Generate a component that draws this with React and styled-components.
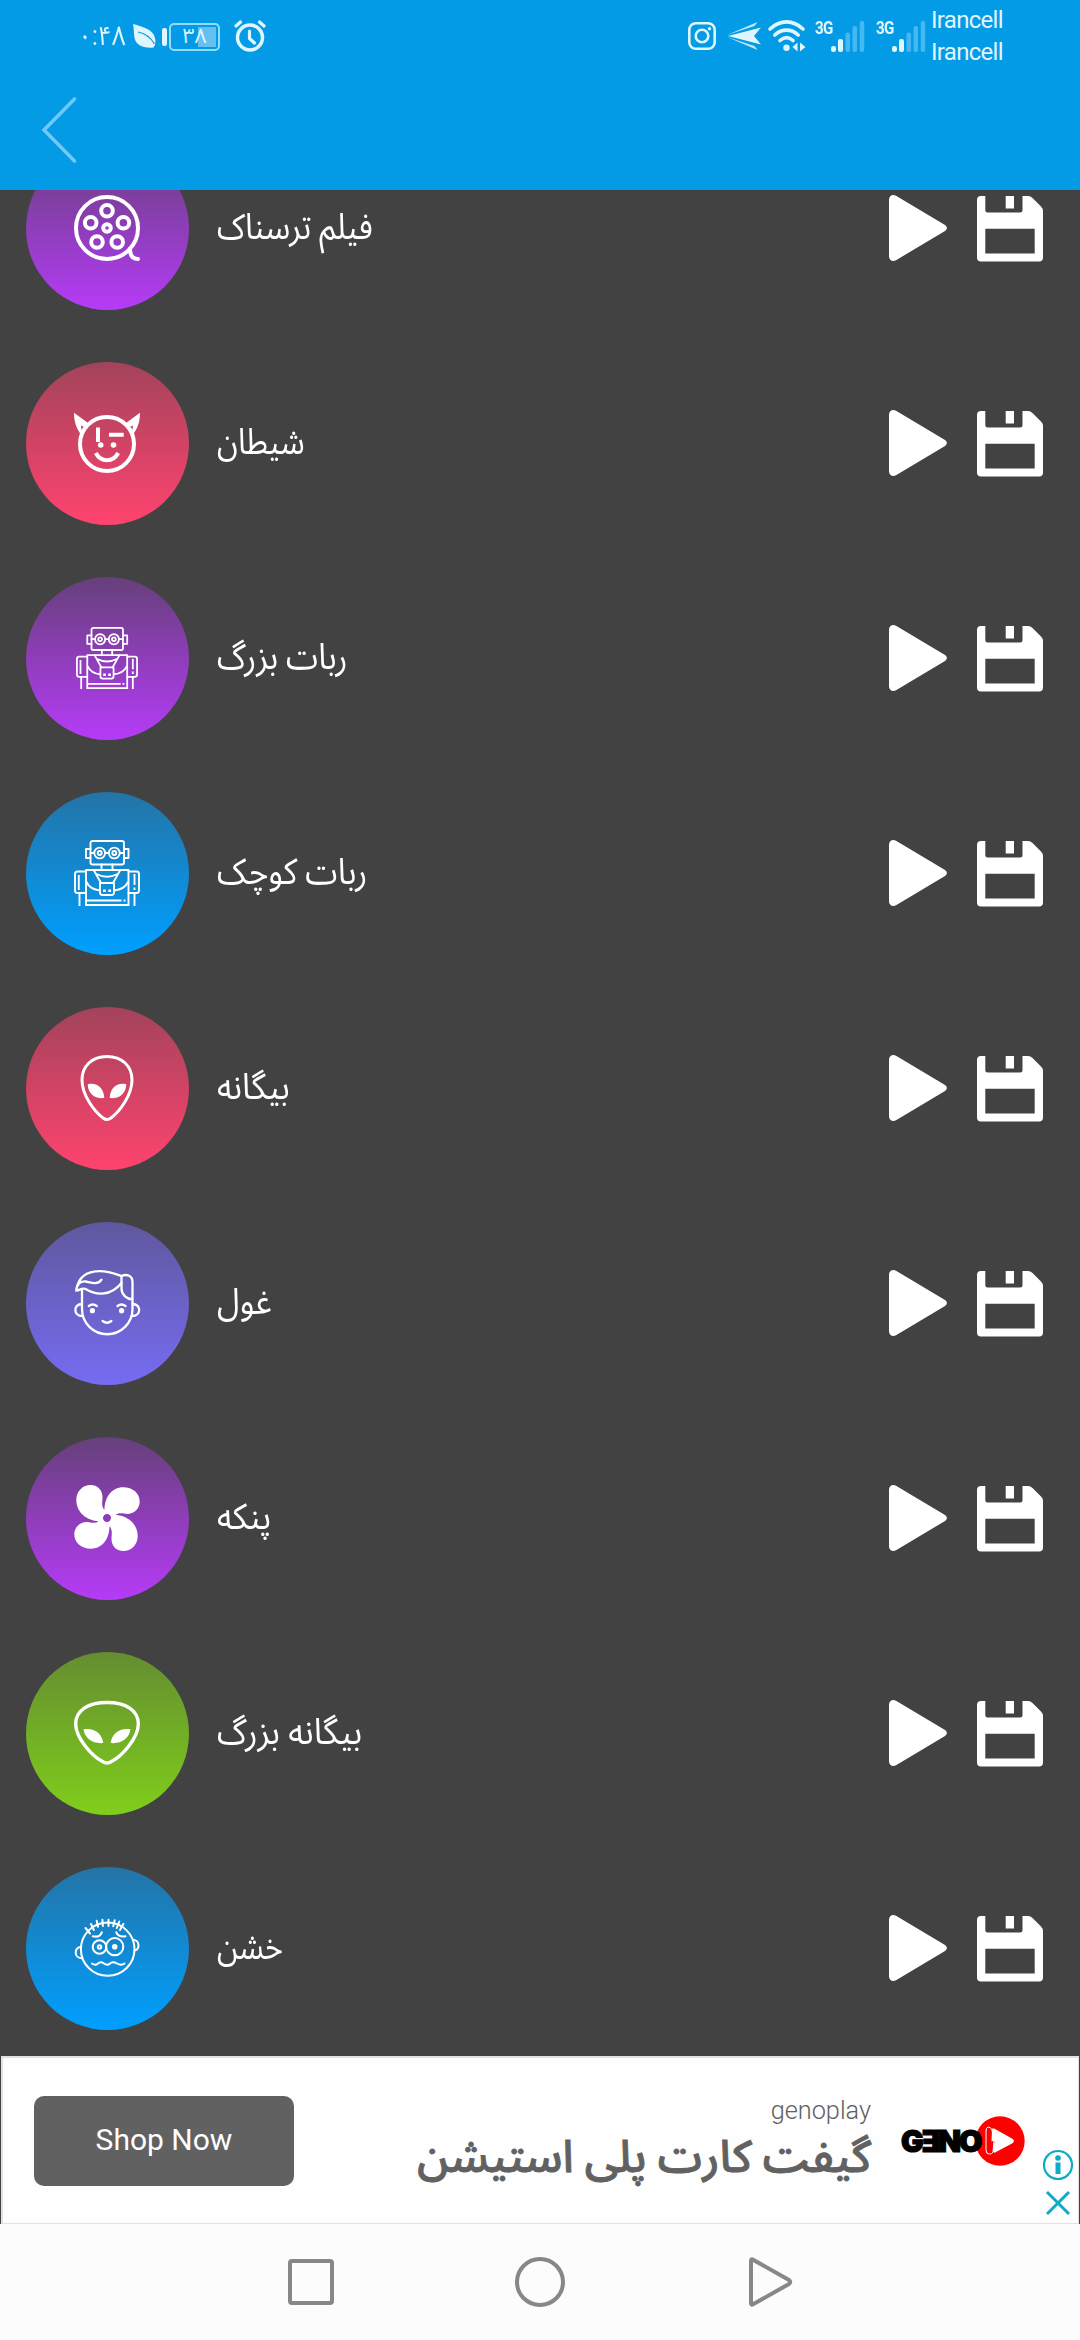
import React from "react";
import styled, { createGlobalStyle } from "styled-components";

const persian = `Roboto, "Noto Sans Arabic", "Noto Sans", "DejaVu Sans", sans-serif`;

const GlobalStyle = createGlobalStyle`
  * { box-sizing: border-box; }
  body { margin: 0; background: #424242; font-family: ${persian}; }
  svg { display: block; flex: none; overflow: visible; }
`;

const Screen = styled.div`
  width: 1080px;
  height: 2340px;
  display: flex;
  flex-direction: column;
  overflow: hidden;
  background: #424242;
`;

const StatusBar = styled.header`
  height: 70px;
  flex: none;
  display: flex;
  justify-content: space-between;
  align-items: flex-start;
  padding: 0 78px 0 78px;
  background: #049be6;
  color: #dff6ff;
`;

const StatusSide = styled.div`
  display: flex;
  align-items: center;
  height: 72px;
`;

const Clock = styled.span`
  width: 49px;
  margin-right: 6px;
  font-size: 27px;
  line-height: 30px;
  white-space: nowrap;
  transform: scaleX(0.9);
  transform-origin: left;
`;

const Battery = styled.div`
  display: flex;
  align-items: center;
  gap: 2px;
  margin: 2px 14px 0 6px;
`;

const BatteryTip = styled.span`
  width: 5px;
  height: 18px;
  border-radius: 2px;
  background: #dff6ff;
`;

const BatteryBody = styled.span`
  width: 51px;
  height: 28px;
  display: flex;
  align-items: center;
  justify-content: center;
  border: 2px solid #92dbfb;
  border-radius: 5px;
  font-size: 21px;
  line-height: 24px;
  padding-bottom: 3px;
  background: linear-gradient(#63c0f0, #63c0f0) 27px 2px / 18px 20px no-repeat;
`;

const Signal = styled.div`
  display: flex;
  align-items: flex-start;
  width: 50px;
  margin-left: ${(p) => p.$gap}px;
`;

const Network = styled.span`
  width: 16px;
  font: 700 19px/15px "Roboto", sans-serif;
  letter-spacing: -1px;
  transform: scaleX(0.8);
  transform-origin: left;
  white-space: nowrap;
`;

const Carriers = styled.div`
  width: 71px;
  margin-left: 5px;
  display: flex;
  flex-direction: column;
  font: 400 24px/32px Roboto, sans-serif;
  letter-spacing: -0.7px;
`;

const Toolbar = styled.nav`
  height: 120px;
  flex: none;
  display: flex;
  align-items: center;
  padding-left: 42px;
  background: #049be6;
`;

const List = styled.main`
  height: 1866px;
  flex: none;
  display: flex;
  flex-direction: column;
  justify-content: flex-end;
  overflow: hidden;
`;

const Row = styled.div`
  height: 215px;
  flex: none;
  display: flex;
  align-items: center;
  padding: 0 37px 0 26px;
`;

const Avatar = styled.div`
  width: 163px;
  height: 163px;
  display: flex;
  align-items: center;
  justify-content: center;
  padding: 0 1px 1px 0;
  border-radius: 50%;
  background: linear-gradient(${(p) => p.$from}, ${(p) => p.$to});
`;

const Label = styled.span`
  flex: 1;
  padding: 0 0 3px 28px;
  color: #fff;
  font-size: 36px;
  line-height: 50px;
  text-align: left;
  direction: rtl;
`;

const LabelText = styled.span`
  display: inline-block;
  white-space: nowrap;
  transform: scaleX(${(p) => p.$condense});
  transform-origin: left;
`;

const Actions = styled.div`
  display: flex;
  align-items: center;
  gap: 30px;
  padding-bottom: 1px;
`;

const Ad = styled.aside`
  height: 168px;
  flex: none;
  display: flex;
  align-items: center;
  margin: 0 1px;
  padding-left: 31px;
  border: 2px solid #e2e2e2;
  border-bottom-width: 1px;
  border-right-width: 1px;
  background: #fefefe;
`;

const ShopButton = styled.button`
  width: 260px;
  height: 90px;
  border: 0;
  border-radius: 10px;
  background: #616161;
  color: #fff;
  font: 400 30px/88px Roboto, sans-serif;
  padding: 0 0 2px;
`;

const AdText = styled.div`
  width: 577px;
  display: flex;
  flex-direction: column;
  align-items: flex-end;
  color: #616161;
`;

const Advertiser = styled.span`
  font: 300 25.3px/32px Roboto, sans-serif;
`;

const Headline = styled.span`
  font-size: 44.7px;
  font-weight: 500;
  line-height: 60px;
  direction: rtl;
  white-space: nowrap;
  -webkit-text-stroke: 0.9px #616161;
`;

const Logo = styled.div`
  width: 124px;
  margin-left: 30px;
  display: flex;
  align-items: center;
`;

const LogoName = styled.span`
  width: 74px;
  font: 900 30px/30px Inter, "DejaVu Sans", sans-serif;
  letter-spacing: -2px;
  color: #000;
  -webkit-text-stroke: 1.2px #000;
  z-index: 1;
  white-space: nowrap;
`;

const AdChoices = styled.div`
  align-self: flex-end;
  margin: 0 0 8px 18px;
  display: flex;
  flex-direction: column;
  align-items: center;
  gap: 11px;
`;

const NavBar = styled.footer`
  height: 116px;
  flex: none;
  display: flex;
  align-items: center;
  justify-content: space-between;
  padding: 0 287px;
  background: #fcfcfc;
`;

const Line = ({ children, w = 3, scale = 66 }) => (
  <svg width={scale} height={scale} viewBox="0 0 66 66" fill="none" stroke="#fff" strokeWidth={w} strokeLinecap="round" strokeLinejoin="round">
    {children}
  </svg>
);

const Reel = () => (
  <Line w={4}>
    <circle cx="33" cy="33" r="31" />
    <circle cx="33" cy="33" r="3.8" />
    <circle cx="33" cy="15.7" r="5.8" />
    <circle cx="16.7" cy="27.7" r="5.8" />
    <circle cx="49.4" cy="27.7" r="5.8" />
    <circle cx="23" cy="47" r="5.8" />
    <circle cx="43.2" cy="47" r="5.8" />
    <path d="M56 54c0 6 2.500 10 8 10" />
  </Line>
);

const Devil = () => (
  <Line w={4}>
    <circle cx="33" cy="34" r="27" />
    <path fill="#fff" stroke="none" fillRule="evenodd" d="M0 2.800L14 13 7.500 25C2.500 19 0 12 0 2.800zM7 15.500l.6 4.500 2.600-3zM66 2.800L52 13l6.500 12C63.500 19 66 12 66 2.800zM59 15.500l-.6 4.500-2.600-3z" />
    <path strokeLinecap="butt" d="M24 17.500V32M35 24.800h14.700" />
    <circle cx="26.700" cy="35" r="2.800" fill="#fff" stroke="none" />
    <circle cx="39.500" cy="35" r="2.800" fill="#fff" stroke="none" />
    <path strokeLinecap="butt" d="M21.800 43c5 9.500 17.400 9.500 22.400 0" />
  </Line>
);

const Robot = ({ scale }) => (
  <Line w={1.9} scale={scale}>
    <rect x="16.500" y="1" width="33.500" height="23.500" rx="2" />
    <path d="M16.500 9H12v9h4.500M50 9h4.500v9H50M16.500 13h3.700M31.200 13h3.600M46 13h4" />
    <circle cx="25.700" cy="13" r="5.400" /><circle cx="40.300" cy="13" r="5.400" />
    <circle cx="25.700" cy="13" r="2" /><circle cx="40.300" cy="13" r="2" />
    <path d="M27.500 24.500V30M38.500 24.500V30" />
    <path strokeLinecap="butt" d="M12 66V30h42.500v36M12 65h42.500M12 60.500h35.500M49.500 60.500h2" />
    <path d="M12 31.500H3.500Q1 31.500 1 34v16.500Q1 53 3.500 53H12M54.500 31.500h8Q65 31.500 65 34v16.500Q65 53 62.500 53h-8" />
    <path strokeLinecap="butt" d="M4.800 35v15M60.500 34v11M60.500 47.500v2.500M5.500 53v13M60.500 53v13" />
    <path d="M19.700 30L27 43M46.300 30L39 43M22.500 34q10.500 5.500 21 0" />
    <path d="M26 43h14v9.500q0 2.500-2.500 2.500h-9Q26 55 26 52.500zM12.500 42q3.500 7.500 13.500 8.500M54 42q-3.500 7.500-14 8.500" />
    <path strokeLinecap="butt" strokeWidth="2.500" d="M29 50.800h2.800M34.300 50.800h2.800" />
  </Line>
);

const Alien = () => (
  <Line w={3}>
    <path d="M33 1.500C18 1.500 8 11 8 25c0 15 12 31 21 38q4 3 8 0c9-7 21-23 21-38C58 11 48 1.500 33 1.500z" />
    <path fill="#fff" stroke="none" d="M13.700 29.200C23 27 30 33 30.300 43 21 44 14 39 13.700 29.200zM52.300 29.200C43 27 36 33 35.700 43c9.300 1 16.300-4 16.600-13.800z" />
  </Line>
);

const WideAlien = () => (
  <Line w={3.400}>
    <path d="M33 2.500C14 2.500 1.700 10.500 1.700 24 1.700 38 18 56 28.500 61.500q4.500 3 9 0C48 56 64.300 38 64.300 24 64.300 10.500 52 2.500 33 2.500z" />
    <path fill="#fff" stroke="none" d="M9.500 29.300C20 27.500 28 33 29.300 43 19 44 11 39 9.500 29.300zM56.500 29.300C46 27.500 38 33 36.700 43 47 44 55 39 56.500 29.300z" />
  </Line>
);

const Boy = () => (
  <Line w={2.300}>
    <path d="M8 19v20a25.200 25.200 0 0 0 50.500 0V12C58.500 6 53 3.500 47.500 6v12.500c0 6 5 10.500 11 11" />
    <path d="M8 34c-9 0-9 12 .500 12M58.500 34c9 0 9 12-.5 12" />
    <path d="M2.200 20.500C4 8 12 1.200 26 1.200 35 1.200 41 3.800 47.500 6M47.500 13C37 26 23 26 11 18.800 8 17.500 6 20.500 2.200 20.500 3 15 6 11 11.500 11.500c4 .5 12 4.500 16-1.800" />
    <path d="M14.800 36q4-3 8 0M43.500 36q4-3 8 0M28.600 51q4.400 3.400 8.800 0" />
    <circle cx="18.400" cy="40.700" r="2.600" fill="#fff" stroke="none" /><circle cx="47.600" cy="40.700" r="2.600" fill="#fff" stroke="none" />
  </Line>
);

const blades = "M25 36.300C12 35.500 2.300 27 2.300 15 2.300 6 9 0 16.500 0c8 0 12.300 6 12 13-.2 5-1 7.500 1.500 11.500L33 30zM30.500 25C30.500 12 38 2.300 49 2.300c10 0 16.700 6.200 16.700 14.200C65.700 25 58 30.500 50 28.600c-4-1-7 0-8 1L36 36z";

const Fan = () => (
  <svg width="66" height="66" viewBox="0 0 66 66" fill="#fff">
    <mask id="hub" maskUnits="userSpaceOnUse" x="-2" y="-2" width="70" height="70">
      <rect x="-2" y="-2" width="70" height="70" fill="#fff" />
      <circle cx="33" cy="33" r="4.200" fill="#000" />
    </mask>
    <path d={blades} mask="url(#hub)" />
    <path d={blades} transform="rotate(180 33 33)" mask="url(#hub)" />
    <circle cx="33" cy="33" r="6.500" fill="none" stroke="#fff" strokeWidth="5" />
  </svg>
);

const Rough = () => (
  <Line w={2}>
    <ellipse cx="33.700" cy="34.200" rx="26.800" ry="26.600" />
    <path d="M7 32c-7 0-7.500 11 .8 11.300M59 25c6.500-1 7.500 10 1.600 10.500" />
    <path d="M11.500 13l4.500 5.500M17 9l2.800 6M22.700 5.800l1.300 6M28.400 4.800l.5 6.200M34.500 4.800V11M40.700 5.200l-1.500 6M45.300 6.500l-2.500 6.500M49.300 9L46 15" />
    <circle cx="25.500" cy="32" r="6.800" /><circle cx="40.700" cy="31.700" r="8.600" />
    <circle cx="25.500" cy="32" r="1.700" /><circle cx="40.700" cy="31.700" r="2.800" fill="#fff" stroke="none" />
    <path d="M18.800 21.300q7 1.500 9-4M42.300 17.300q2 5 9.200 4" />
    <path d="M18 48.500q3.300 2.500 6 0t6 0 6 0 7 0 7.500 0" />
  </Line>
);

const Play = () => (
  <svg width="58" height="66" viewBox="0 0 58 66" fill="#fff">
    <path d="M0 4.500C0 .8 3.800-1.200 7 .8L56 30c2.500 1.600 2.500 4.400 0 6L7 65.200c-3.200 2-7 0-7-3.700z" />
  </svg>
);

const Save = () => (
  <svg width="66" height="66" viewBox="0 -0.5 66 66" fill="#fff">
    <path fillRule="evenodd" d="M4 .5H8.300V14.500q0 2.500 2.500 2.500H43q2.500 0 2.500-2.500V.5H51q2.500 0 4.500 2L64 11q2 2 2 4.500V62q0 4-4 4H4q-4 0-4-4V4.500q0-4 4-4zM8.300 33.300V58h49.400V33.300z" />
    <path d="M28.700.5H37v12.500h-8.300z" />
  </svg>
);

const Bars = () => (
  <svg width="34" height="32" viewBox="0 0 34 32" fill="#dff6ff">
    <rect x="0" y="26" width="5" height="6" rx="2.300" />
    <rect x="7" y="19" width="5" height="13" rx="2" />
    <g fill="#43b8f2">
      <rect x="14.500" y="12.500" width="4.500" height="19.500" rx="2" />
      <rect x="21.500" y="6" width="4.500" height="26" rx="2" />
      <rect x="28.700" y="1" width="4.500" height="31" rx="2" />
    </g>
  </svg>
);

const purple = ["#66407a", "#b63bf8"];
const red = ["#a3435b", "#ff436f"];
const blue = ["#2474a6", "#009fff"];

const effects = [
  { name: "فیلم ترسناک", condense: 0.885, icon: <Reel />, tone: purple },
  { name: "شیطان", condense: 0.855, icon: <Devil />, tone: red },
  { name: "ربات بزرگ", condense: 0.905, icon: <Robot scale={62} />, tone: purple },
  { name: "ربات کوچک", condense: 0.91, icon: <Robot scale={66} />, tone: blue },
  { name: "بیگانه", condense: 0.92, icon: <Alien />, tone: red },
  { name: "غول", condense: 0.91, icon: <Boy />, tone: ["#5f589d", "#766bf2"] },
  { name: "پنکه", condense: 0.92, icon: <Fan />, tone: purple },
  { name: "بیگانه بزرگ", condense: 0.935, icon: <WideAlien />, tone: ["#658d31", "#7fce1b"] },
  { name: "خشن", condense: 0.845, icon: <Rough />, tone: blue },
];

const Leaf = () => (
  <svg width="23" height="24" viewBox="0 0 23 24">
    <path fill="#dff6ff" d="M0 0c10 3 20 5 22 14 .8 3 .2 5 0 7l-1.500 2.500C10 24.500 3 21 1.500 14 .8 9 1 5 0 0z" />
    <path fill="none" stroke="#049be6" strokeWidth="1.200" d="M5 8c8 1.500 13 6 16.500 12" />
  </svg>
);

const Alarm = () => (
  <svg width="32" height="32" viewBox="0 0 32 32" fill="none" stroke="#dff6ff" strokeLinecap="round">
    <circle cx="16" cy="17.500" r="12.500" strokeWidth="3.500" />
    <path strokeWidth="3.200" d="M2 6l4.500-4M30 6l-4.500-4M15.500 11v7.500l5 4.500" />
  </svg>
);

const Instagram = () => (
  <svg width="28" height="28" viewBox="0 0 28 28" fill="none" stroke="#dff6ff" strokeWidth="2.600">
    <rect x="1.300" y="1.300" width="25.400" height="25.400" rx="6.500" />
    <circle cx="14" cy="14" r="6.300" />
    <circle cx="21.500" cy="6.700" r="1.700" fill="#dff6ff" stroke="none" />
  </svg>
);

const PlaneSlot = styled.div`
  margin: 0 7px 0 11px;
`;

const PaperPlane = () => (
  <PlaneSlot>
    <svg width="34" height="28" viewBox="0 0 34 28" fill="#dff6ff">
      <path d="M1 14L34 5.500 27 14l7 8.500z" />
      <path d="M0 13L30.500 0l-3 4zM0 15l30.500 13-3-4z" opacity=".85" />
    </svg>
  </PlaneSlot>
);

const Wifi = () => (
  <svg width="38" height="32" viewBox="0 0 38 32" fill="none" stroke="#dff6ff" strokeWidth="3.600" strokeLinecap="round">
    <path d="M2 9c10-9.500 23-9.500 33 0M6.800 15c7-6.500 16.400-6.500 23.400 0M12 20.500c4.500-4 8.800-4 13 0" />
    <circle cx="18.500" cy="27.700" r="3.200" fill="#dff6ff" stroke="none" />
    <path d="M29.500 22.500v9L24.500 27zM32 22.500v9l5.500-4.500z" fill="#dff6ff" stroke="none" />
  </svg>
);

export default function App() {
  return (
    <Screen>
      <GlobalStyle />
      <StatusBar>
        <StatusSide>
          <Clock>۰:۴۸</Clock>
          <Leaf />
          <Battery>
            <BatteryTip />
            <BatteryBody>۳۸</BatteryBody>
          </Battery>
          <Alarm />
        </StatusSide>
        <StatusSide>
          <Instagram />
          <PaperPlane />
          <Wifi />
          <Signal $gap={9}><Network>3G</Network><Bars /></Signal>
          <Signal $gap={11}><Network>3G</Network><Bars /></Signal>
          <Carriers><span>Irancell</span><span>Irancell</span></Carriers>
        </StatusSide>
      </StatusBar>
      <Toolbar>
        <svg width="34" height="66" viewBox="0 0 34 66" fill="none" stroke="#70c9f8" strokeWidth="3.500" strokeLinecap="round">
          <path d="M32.500 2L2 33l30.500 31" />
        </svg>
      </Toolbar>
      <List>
        {effects.map((e) => (
          <Row key={e.name}>
            <Avatar $from={e.tone[0]} $to={e.tone[1]}>{e.icon}</Avatar>
            <Label><LabelText $condense={e.condense}>{e.name}</LabelText></Label>
            <Actions><Play /><Save /></Actions>
          </Row>
        ))}
      </List>
      <Ad>
        <ShopButton>Shop Now</ShopButton>
        <AdText>
          <Advertiser>genoplay</Advertiser>
          <Headline>گیفت کارت پلی استیشن</Headline>
        </AdText>
        <Logo>
          <LogoName>GƎNO</LogoName>
          <svg width="50" height="50" viewBox="0 0 50 50">
            <circle cx="25" cy="25" r="24.700" fill="#fe0000" />
            <path d="M17 13q1-1.500 3 0l17 9.500q4 2.500 0 5L21 36q-2 1.500-3-.5l1.500-11-3 1z" fill="#fff" />
            <path d="M19 24l-2-10q-1-3-4-3-2 1-2 4v19q0 4 3 4 3 .5 4-2z" fill="none" stroke="#fff" strokeWidth="1" />
          </svg>
        </Logo>
        <AdChoices>
          <svg width="30" height="30" viewBox="0 0 30 30" fill="#0cabc8">
            <circle cx="15" cy="15" r="14" fill="none" stroke="#0cabc8" strokeWidth="2.200" />
            <circle cx="15" cy="8" r="2.800" /><path d="M12.500 12.500h5V24h-5z" />
          </svg>
          <svg width="24" height="24" viewBox="0 0 24 24" stroke="#0cabc8" strokeWidth="3">
            <path d="M1 1l22 22M23 1L1 23" />
          </svg>
        </AdChoices>
      </Ad>
      <NavBar>
        <svg width="44" height="50" viewBox="0 0 44 50" fill="none" stroke="#878787" strokeWidth="4">
          <rect x="3" y="4" width="42" height="42" rx="2" />
        </svg>
        <svg width="50" height="50" viewBox="0 0 50 50" fill="none" stroke="#878787" strokeWidth="4">
          <circle cx="25" cy="25" r="23" />
        </svg>
        <svg width="44" height="50" viewBox="0 0 44 50" fill="none" stroke="#878787" strokeWidth="4" strokeLinejoin="round">
          <path d="M2 4q0-3 2.500-1L40 23q2.500 2 0 4L4.500 47Q2 49 2 46z" />
        </svg>
      </NavBar>
    </Screen>
  );
}
